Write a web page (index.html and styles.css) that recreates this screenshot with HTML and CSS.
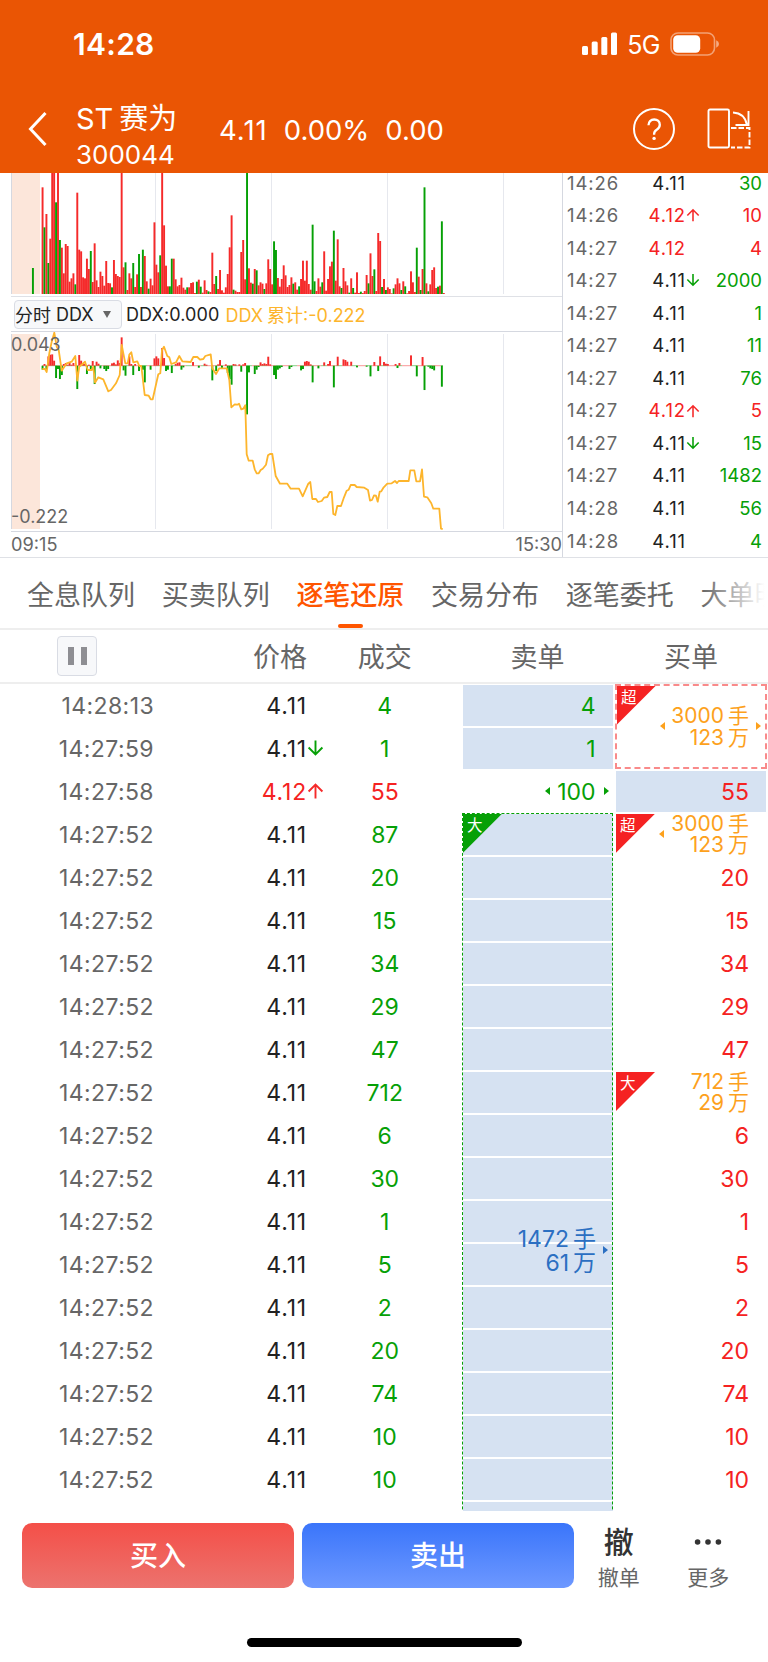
FILE: index.html
```html
<!DOCTYPE html>
<html lang="zh-CN">
<head>
  <meta charset="UTF-8" />
  <meta name="viewport" content="width=device-width, initial-scale=1" />
  <title>ST赛为 300044</title>
  <link rel="stylesheet" href="styles.css">
</head>
<body>
  <header class="header">
    <div class="status">
      <span class="clock">14:28</span>
      <svg class="signal" width="36" height="24" viewBox="0 0 36 24" fill="#fff">
        <rect x="0" y="14" width="6" height="9" rx="1.5"/>
        <rect x="9.7" y="9.5" width="6" height="13.5" rx="1.5"/>
        <rect x="19.3" y="5" width="6" height="18" rx="1.5"/>
        <rect x="29" y="0.5" width="6" height="22.5" rx="1.5"/>
      </svg>
      <span class="net">5G</span>
      <svg class="battery" width="50" height="24" viewBox="0 0 50 24">
        <rect x="1" y="1" width="43.5" height="22" rx="7" fill="none" stroke="#fff" stroke-opacity=".45" stroke-width="1.6"/>
        <rect x="3.2" y="3.3" width="27" height="17.4" rx="4.5" fill="#fff"/>
        <path d="M46.2 8.3q2.8 1.2 2.8 3.7t-2.8 3.7z" fill="#fff" fill-opacity=".5"/>
      </svg>
    </div>
    <div class="nav">
      <svg class="back" width="20" height="36" viewBox="0 0 20 36" fill="none" stroke="#fff" stroke-width="3">
        <path d="M17.5 2L2.5 18l15 16"/>
      </svg>
      <div class="stock">
        <div class="stock-name">ST<span class="cjk">赛为</span></div>
        <div class="stock-code">300044</div>
      </div>
      <div class="quote"><span class="last">4.11</span><span>0.00%</span><span>0.00</span></div>
      <svg class="help" width="44" height="44" viewBox="0 0 44 44" fill="none" stroke="#fff" stroke-width="2">
        <circle cx="22" cy="22" r="20"/>
        <path d="M16.5 18.3c0-3.5 2.3-5.8 5.7-5.8s5.6 2.1 5.6 5.2c0 2.4-1.2 3.7-3.1 5-1.9 1.2-2.6 2.2-2.6 4.3v.8" stroke-width="2.3"/>
        <circle cx="22.1" cy="31.4" r="1.7" fill="#fff" stroke="none"/>
      </svg>
      <svg class="rotate" width="46" height="42" viewBox="0 0 46 42" fill="none" stroke="#fff" stroke-width="1.9">
        <rect x="1.5" y="1.5" width="20.5" height="38" rx="1.5"/>
        <path d="M24 20h18.5V39.5H24" stroke-dasharray="5.5 2"/>
        <path d="M26 4.5c7.5.5 12.5 5 13.8 12M28.5 17H41.5V3"/>
      </svg>
    </div>
  </header>

  <section class="market">
    <div class="charts">
      <svg class="volume" id="volume" width="551" height="123" viewBox="0 0 551 123"></svg>
      <div class="indicator">
        <button class="picker"><span>分时</span><span>DDX</span><i></i></button>
        <span class="ddx">DDX:0.000</span>
        <span class="ddx-sum">DDX<span class="gap">累计</span>:-0.222</span>
      </div>
      <div class="ddx-chart">
        <svg id="ddx" width="551" height="199" viewBox="0 0 551 199"></svg>
        <span class="y-max">0.043</span>
        <span class="y-min">-0.222</span>
      </div>
      <div class="axis"><span>09:15</span><span>15:30</span></div>
    </div>
    <div class="ticks" id="ticks"></div>
  </section>

  <nav class="tabs">
    <span>全息队列</span>
    <span>买卖队列</span>
    <span class="active">逐笔还原</span>
    <span>交易分布</span>
    <span>逐笔委托</span>
    <span>大单明细</span>
  </nav>

  <div class="head">
    <button class="pause"><i></i><i></i></button>
    <span class="h-price">价格</span>
    <span class="h-vol">成交</span>
    <span class="h-sell">卖单</span>
    <span class="h-buy">买单</span>
  </div>

  <main class="orders" id="orders"></main>

  <footer class="footer">
    <div class="actions">
      <button class="btn buy">买入</button>
      <button class="btn sell">卖出</button>
      <div class="tool"><b>撤</b><span>撤单</span></div>
      <div class="tool">
        <svg width="28" height="32" viewBox="0 0 28 32" fill="#333">
          <circle cx="3.6" cy="16" r="2.8"/><circle cx="14" cy="16" r="2.8"/><circle cx="24.4" cy="16" r="2.8"/>
        </svg>
        <span>更多</span>
      </div>
    </div>
    <div class="home"></div>
  </footer>

  <script src="script.js"></script>
</body>
</html>
```
FILE: styles.css
```css
* {
  box-sizing: border-box;
}

body {
  margin: 0;
  width: 768px;
  height: 1662px;
  overflow: hidden;
  background: #fff;
  color: #222;
  font-family: Inter, "Noto Sans CJK SC", sans-serif;
}

button {
  font-family: inherit;
  padding: 0;
  border: 0;
}

svg {
  display: block;
  flex: none;
}

.red { color: #f52222; }
.green { color: #06a006; }

/* header */
.header {
  position: relative;
  z-index: 1;
  height: 173px;
  background: #ea5504;
  color: #fff;
}

.status {
  display: flex;
  align-items: center;
  height: 88px;
  padding: 0 48px 0 73px;
}

.clock {
  flex: 1;
  font-size: 30px;
  font-weight: 600;
  letter-spacing: 0.3px;
}

.net {
  margin: 2px 10px 0 9px;
  font-size: 25px;
  letter-spacing: -0.5px;
}

.nav {
  display: flex;
  align-items: center;
  height: 82px;
  padding: 0 15px 0 28px;
}

.stock {
  width: 143px;
  margin: 12px 0 0 28px;
}

.stock-name {
  font-size: 29px;
  line-height: 38px;
}

.stock-name .cjk {
  margin-left: 6px;
}

.stock-code {
  font-size: 26px;
  line-height: 33px;
}

.quote {
  display: flex;
  flex: 1;
  gap: 16px;
  margin-top: 2px;
  font-size: 27.5px;
}

.quote .last {
  letter-spacing: 1px;
}

.rotate {
  margin-left: 31px;
}

/* charts and tick list */
.market {
  display: flex;
  height: 384.5px;
  border-bottom: 1px solid #dfe1e6;
}

.charts {
  width: 563px;
  padding-left: 11px;
  border-right: 1px solid #d5d8e0;
}

.indicator {
  display: flex;
  align-items: center;
  height: 36px;
  padding-left: 3px;
  border-top: 1px solid #dfe1e6;
  border-bottom: 1px solid #d5d8e0;
  font-size: 18px;
}

.picker {
  display: flex;
  align-items: center;
  gap: 5px;
  width: 108px;
  height: 29px;
  margin-right: 4px;
  border: 1px solid #d9dce4;
  border-radius: 4px;
  background: #f7f8fa;
  color: #222;
  font-size: 18px;
}

.picker i {
  margin-left: 4px;
  border: 4.5px solid transparent;
  border-top: 7px solid #666;
  border-bottom: 0;
}

.ddx {
  letter-spacing: 0.1px;
}

.ddx-sum {
  margin-left: 6px;
  color: #fdb52c;
}

.gap {
  margin-left: 4px;
}

.ddx-chart {
  position: relative;
  border-bottom: 1px solid #d5d8e0;
}

.y-max,
.y-min {
  position: absolute;
  left: 0;
  color: #666;
  font-size: 18px;
  line-height: 20px;
}

.y-max { top: 3px; }
.y-min { bottom: 4px; }

.axis {
  display: flex;
  justify-content: space-between;
  color: #666;
  font-size: 18.2px;
  line-height: 25px;
}

.ticks {
  flex: 1;
  margin-top: -6.5px;
  padding: 0 6px 0 4px;
}

.tick {
  display: grid;
  grid-template-columns: 54px 65px 1fr;
  height: 32.55px;
  line-height: 32.55px;
  font-size: 18.5px;
}

.tick .t {
  color: #666;
  letter-spacing: 0.9px;
}

.tick .price {
  letter-spacing: 0.9px;
}

.price {
  position: relative;
  text-align: right;
}

.price svg {
  position: absolute;
  top: 50%;
  left: 100%;
  transform: translateY(-50%);
}

.tick .v {
  text-align: right;
}

/* tabs */
.tabs {
  position: relative;
  display: flex;
  gap: 26.7px;
  height: 72px;
  padding-left: 27px;
  overflow: hidden;
  border-bottom: 2px solid #eee;
  color: #666;
  font-size: 27px;
  line-height: 76px;
  white-space: nowrap;
}

.tabs::after {
  content: "";
  position: absolute;
  right: 0;
  width: 66px;
  height: 70px;
  background: linear-gradient(90deg, rgba(255, 255, 255, 0), #fff 95%);
}

.tabs .active {
  position: relative;
  color: #ff5500;
  font-weight: 500;
}

.tabs .active::after {
  content: "";
  position: absolute;
  left: 50%;
  top: 66px;
  width: 25px;
  height: 4px;
  margin-left: -12.5px;
  border-radius: 2px;
  background: #ff5500;
}

/* order table */
.head,
.orders {
  display: grid;
  grid-template-columns: 154px 153px 155.5px 150px 3.5px 150px;
}

.head {
  align-items: center;
  height: 54px;
  border-bottom: 2px solid #eee;
  color: #666;
  font-size: 27px;
}

.pause {
  display: flex;
  align-items: center;
  justify-content: center;
  gap: 7px;
  width: 40px;
  height: 40px;
  margin-left: 57px;
  border: 1px solid #d9dce4;
  border-radius: 4px;
  background: #f7f8fa;
}

.pause i {
  width: 6px;
  height: 18px;
  background: #8e8e93;
}

.h-price { text-align: right; }
.h-vol,
.h-sell,
.h-buy { text-align: center; }
.h-buy { grid-column: 6; }

.orders {
  grid-auto-rows: 43.05px;
  height: 827px;
  overflow: hidden;
  font-size: 23px;
  line-height: 44.5px;
}

.time {
  grid-column: 1;
  color: #666;
  letter-spacing: 0.4px;
  text-align: right;
}

.orders .price {
  grid-column: 2;
  letter-spacing: 0.8px;
}

.vol {
  grid-column: 3;
  text-align: center;
}

.ask { grid-column: 4; }
.bid { grid-column: 6; }

.ask,
.bid {
  position: relative;
  padding-right: 17px;
  text-align: right;
}

.fill::before {
  content: "";
  position: absolute;
  z-index: -1;
  inset: 1px 0;
  background: #d6e2f2;
}

.order {
  position: relative;
  display: flex;
  flex-direction: column;
  justify-content: center;
  padding-right: 17px;
  color: #fda11c;
  font-size: 21px;
  line-height: 21.6px;
  text-align: right;
}

.order.dash-red {
  margin: 0 -1px 1px;
  padding: 1px 16px 0 0;
  border: 2px dashed #f98a8a;
}

.order.dash-green {
  margin: 0 -0.5px -15px;
  padding-right: 16px;
  border: 1px dashed #06a006;
  color: #2b6fc2;
  font-size: 23px;
  line-height: 24px;
}

.corner {
  position: absolute;
  top: 1px;
  left: 0;
  width: 39px;
  height: 39px;
  padding: 2px 0 0 4px;
  background: #f52222;
  clip-path: polygon(0 0, 100% 0, 0 100%);
  color: #fff;
  font-size: 15.5px;
  line-height: 20px;
  text-align: left;
}

.dash-red .corner,
.dash-green .corner {
  top: 0;
}

.corner.down {
  background: #06a006;
}

.arrow-l,
.arrow-r {
  position: absolute;
  top: 50%;
  margin-top: -4.5px;
  border: 4.5px solid transparent;
}

.arrow-l {
  left: 43px;
  border-left: 0;
  border-right: 5.5px solid;
}

.arrow-r {
  right: 4px;
  border-right: 0;
  border-left: 5.5px solid;
}

.ask .arrow-l {
  left: 82px;
}

/* footer */
.footer {
  height: 151px;
  padding: 12px 15px 0 22px;
}

.actions {
  display: flex;
}

.btn {
  width: 272px;
  height: 65px;
  margin-right: 8px;
  padding-bottom: 2px;
  border-radius: 10px;
  color: #fff;
  font-size: 28px;
  font-weight: 500;
}

.buy { background: linear-gradient(#f44f48, #ec736e); }

.sell {
  margin-right: 0;
  background: linear-gradient(#3a75fa, #6d98ff);
}

.tool {
  display: flex;
  flex: 1;
  flex-direction: column;
  align-items: center;
  margin-top: 3px;
  color: #666;
  font-size: 21px;
  line-height: 39px;
}

.tool b {
  color: #333;
  font-size: 30px;
  font-weight: 500;
  line-height: 32px;
}

.home {
  width: 275px;
  height: 9.5px;
  margin: 41px auto 0 225px;
  border-radius: 5px;
  background: #000;
}
```
FILE: script.js
```js
const RED = "#f52a2a";
const GREEN = "#06a006";
const STEP = 1.929;

// minute volume, bar heights in thirds of a pixel, "g" marks a falling minute
const volume = ("320 200g 240 93g 166 400 400 275g 400 162g 139 62 150 144 37 47 62 29g 304 133 128 50 47 106 75 129g 36 152 41 21 " +
  "67 54 25 99 33 32 20g 102 60 54 51 400 80 95g 12 62 47 93g 21 59 120g 21 133g 114 38 16g 46 26 215 88 " +
  "65 116g 400 206 85 23 23g 106g 106 44 23 27 49 19 13 20g 20 33 35 3 37g 43 22g 4 41 12 8g 6 124 30 " +
  "54g 15 72 11 4 20 60 140 236 13g 10 6 6 126 162 44 400g 77 34 31g 75 71g 26 35 31 15g 32 104 75 29 " +
  "158g 132g 48 22 45 86 56 21 27 50 31g 35 13 23g 45 100 40 100 30 13 208g 38g 9 47 22 35g 128 10 45 83 " +
  "97 190g 40 164 23 18g 78 38 26 4g 47 18g 4 65 3 7g 3 9 57 32g 122 54 74g 9 183 159 21g 45 12g 20 " +
  "15 2 17g 29 47 32 12g 38 23g 2 9 68 35 6 139g 52 12g 75 320g 32 8g 29 72 80 18 22g 25 218g 3").split(" ");

// minute DDX as [minute, value], positive is drawn upward
const ddx = [[0,-12],[1,5],[2,-10],[3,28],[4,33],[5,34],[6,15],[7,-37],[8,-10],[9,-40],[10,-28],[11,5],[12,8],[13,3],[14,8],[15,3],[16,8],
  [18,-70],[19,32],[20,15],[21,8],[22,5],[23,-25],[24,3],[25,-10],[26,14],[27,-55],[28,12],[29,6],[30,-8],[32,-10],[33,-16],[34,-10],
  [36,7],[37,9],[38,4],[39,16],[40,8],[41,85],[42,-14],[43,-30],[45,28],[46,5],[47,-28],[48,5],[50,-16],[52,-12],[53,-50],[56,-12],
  [58,22],[59,28],[60,22],[62,53],[63,23],[64,-16],[65,-12],[67,-22],[69,5],[70,9],[71,10],[72,-12],[73,-5],[78,11],[81,-6],[84,6],[85,3],
  [88,-44],[90,-16],[91,4],[92,17],[93,-8],[95,4],[96,-22],[97,-40],[98,-57],[99,5],[100,4],[102,4],[103,-18],[104,4],[105,8],[106,-146],
  [107,-20],[110,-25],[111,-12],[112,-4],[113,10],[114,5],[115,7],[116,5],[117,27],[118,4],[120,-28],[121,-40],[122,-12],[123,-8],[124,-4],[128,-10],
  [129,-4],[134,-14],[135,-10],[136,12],[137,14],[138,12],[139,4],[140,-50],[143,-8],[146,10],[148,5],[149,14],[151,-65],[153,27],[156,19],
  [157,17],[158,12],[160,12],[163,-5],[168,-3],[170,-32],[172,11],[174,-16],[175,28],[177,11],[178,6],[179,5],[183,5],[184,-7],[185,8],
  [191,31],[194,-32],[197,26],[198,-73],[200,-3],[201,-8],[202,-10],[203,-14],[207,-63]];

// running DDX total
const total = "127,147 135,147 140,156 148,100 155,65 163,38 170,80 176,90 185,152 200,130 215,125 226,108 232,182 238,140 255,125 263,150 275,150 280,140 " +
  "285,188 295,172 310,178 325,214 333,210 348,190 359,165 365,75 376,130 383,130 388,104 394,97 400,127 412,124 418,138 424,138 434,225 446,227 452,238 " +
  "458,238 475,163 481,160 486,90 492,80 502,108 508,112 514,132 528,127 538,108 547,124 572,126 580,111 592,111 600,119 610,117 616,108 632,103 " +
  "637,145 648,162 658,145 680,145 688,180 694,262 704,253 712,254 717,251 724,268 730,266 736,256 740,403 746,422 758,422 764,448 770,460 776,460 " +
  "782,450 788,446 798,434 804,406 810,402 817,402 827,468 840,491 862,491 872,506 897,506 908,529 925,491 931,486 937,537 948,537 954,546 965,543 " +
  "972,533 982,531 989,516 995,516 1000,582 1006,585 1012,558 1023,558 1032,532 1040,512 1046,509 1052,495 1064,495 1070,501 1093,503 1104,510 " +
  "1110,542 1116,540 1122,526 1128,527 1133,545 1139,515 1144,514 1151,502 1162,491 1175,490 1185,483 1191,489 1196,483 1226,483 1231,451 1243,451 " +
  "1249,484 1260,484 1266,448 1272,530 1282,532 1294,550 1300,566 1318,566 1323,626 1328,627";

function frame(top, bottom) {
  let out = `<rect x="0" y="${top}" width="29" height="${bottom - top}" fill="#fce6da"/>`;
  out += `<path d="M.5 ${top}V${bottom}" stroke="#d5d8e0"/>`;
  [144.5, 260.5, 376.5, 492.5].forEach(x => {
    out += `<path d="M${x} ${top}V${bottom}" stroke="#e6e8ee"/>`;
  });
  return out;
}

function bar(i, y, h, color) {
  return `<rect x="${(30.6 + i * STEP).toFixed(2)}" y="${y.toFixed(2)}" width="1.93" height="${h.toFixed(2)}" fill="${color}"/>`;
}

let svg = frame(0, 121) + bar(-5, 95, 26, GREEN);
volume.forEach((v, i) => {
  const h = parseInt(v, 10) / 3;
  svg += bar(i, 121 - h, h, v.endsWith("g") ? GREEN : RED);
});
document.getElementById("volume").innerHTML = svg;

svg = frame(2, 197) + `<path d="M31 33.7H432" stroke="${RED}" stroke-width=".8" stroke-dasharray="9 6" opacity=".6"/>`;
svg += `<path d="M40 33.7H432" stroke="${GREEN}" stroke-width=".8" stroke-dasharray="6 9" opacity=".6"/>`;
ddx.forEach(([i, v]) => {
  svg += bar(i, v > 0 ? 33.7 - v / 3 : 33.7, Math.abs(v) / 3, v > 0 ? RED : GREEN);
});
const points = total.split(" ").map(p => {
  const [x, y] = p.split(",");
  return (x / 3 - 11).toFixed(1) + "," + (y / 3 - 12).toFixed(1);
});
svg += `<polyline points="${points.join(" ")}" fill="none" stroke="#fdb52c" stroke-width="1.8" stroke-linejoin="round"/>`;
document.getElementById("ddx").innerHTML = svg;

function priceCell(p, size) {
  const dir = p.slice(4);
  const cls = p.startsWith("4.12") ? "price red" : "price";
  let icon = "";
  if (dir) {
    const d = dir === "u" ? "M8 15V2M1.5 8.5L8 2l6.5 6.5" : "M8 1v13M1.5 7.5L8 14l6.5-6.5";
    icon = `<svg width="${size}" height="${size}" viewBox="0 0 16 16" fill="none" stroke="${dir === "u" ? RED : GREEN}" stroke-width="1.8"><path d="${d}"/></svg>`;
  }
  return `<span class="${cls}">${p.slice(0, 4)}${icon}</span>`;
}

const ticks = [
  ["14:26", "4.11", 30], ["14:26", "4.12u", 10], ["14:27", "4.12", 4], ["14:27", "4.11d", 2000],
  ["14:27", "4.11", 1], ["14:27", "4.11", 11], ["14:27", "4.11", 76], ["14:27", "4.12u", 5],
  ["14:27", "4.11d", 15], ["14:27", "4.11", 1482], ["14:28", "4.11", 56], ["14:28", "4.11", 4]
];
document.getElementById("ticks").innerHTML = ticks.map(([t, p, v]) =>
  `<div class="tick"><span class="t">${t}</span>${priceCell(p, 14)}<span class="v ${p.startsWith("4.12") ? "red" : "green"}">${v}</span></div>`
).join("");

const vols = [4, 1, 55, 87, 20, 15, 34, 29, 47, 712, 6, 30, 1, 5, 2, 20, 74, 10, 10];
const times = ["14:28:13", "14:27:59", "14:27:58"];
const prices = ["4.11", "4.11d", "4.12u"];

let html = "";
vols.forEach((v, i) => {
  const row = i + 1;
  const at = c => c.replace("class=\"", `style="grid-row:${row}" class="`);
  html += at(`<span class="time">${times[i] || "14:27:52"}</span>`);
  html += at(priceCell(prices[i] || "4.11", 17));
  html += at(`<span class="vol ${i === 2 ? "red" : "green"}">${v}</span>`);
  if (i < 2) html += at(`<span class="ask fill green">${v}</span>`);
  else if (i === 2) html += at(`<span class="ask green"><i class="arrow-l"></i>100<i class="arrow-r"></i></span>`);
  else html += at(`<span class="ask fill"></span>`);
  if (i === 2) html += at(`<span class="bid fill red">${v}</span>`);
  else if (i > 3 && i !== 9) html += at(`<span class="bid red">${v}</span>`);
});
html += `<span class="ask fill" style="grid-row:20"></span>`;

function order(cls, rows, hands, amount, extra) {
  return `<div class="order ${cls}" style="grid-row:${rows}">${extra}<div>${hands}<span class="gap">手</span></div><div>${amount}<span class="gap">万</span></div></div>`;
}
const left = `<i class="arrow-l"></i>`;
const right = `<i class="arrow-r"></i>`;
html += order("bid dash-red", "1 / 3", 3000, 123, `<span class="corner">超</span>${left}${right}`);
html += order("bid", "4", 3000, 123, `<span class="corner">超</span>${left}`);
html += order("bid", "10", 712, 29, `<span class="corner">大</span>`);
html += order("ask dash-green", "4 / 24", 1472, 61, `<span class="corner down">大</span>${right}`);
document.getElementById("orders").innerHTML = html;
```
